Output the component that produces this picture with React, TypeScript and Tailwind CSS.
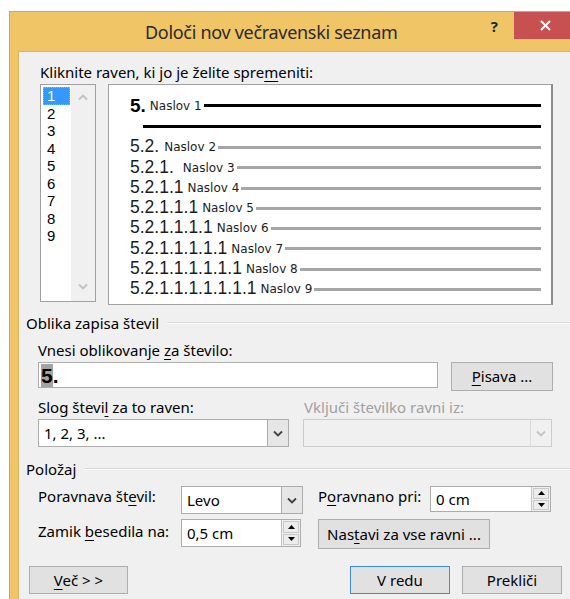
import React from "react";
import clsx from "clsx";

const UI_FONT = '"Noto Sans", "Open Sans", "DejaVu Sans", sans-serif';
const NUM_FONT = '"Liberation Sans", Arial, sans-serif';
const SMALL_FONT = '"DejaVu Sans", Verdana, sans-serif';

type Kids = { children?: React.ReactNode; className?: string };

// access-key underline
function Acc({ children }: Kids) {
  return <span className="underline decoration-1 underline-offset-[3px]">{children}</span>;
}

function Chevron({ dir = "down", color = "#3c3c3c" }: { dir?: "up" | "down"; color?: string }) {
  const d = dir === "down" ? "M1 1.5 L5 5.5 L9 1.5" : "M1 5.5 L5 1.5 L9 5.5";
  return (
    <svg width="10" height="7" viewBox="0 0 10 7" aria-hidden>
      <path d={d} fill="none" stroke={color} strokeWidth="1.8" />
    </svg>
  );
}

function Tri({ dir }: { dir: "up" | "down" }) {
  return (
    <svg width="7" height="4" viewBox="0 0 7 4" aria-hidden>
      <path d={dir === "up" ? "M0 4 L3.5 0 L7 4 Z" : "M0 0 L3.5 4 L7 0 Z"} fill="#000" />
    </svg>
  );
}

function Button({ children, className, primary }: Kids & { primary?: boolean }) {
  return (
    <div
      className={clsx(
        "flex items-center justify-center bg-[#e1e1e1] border",
        primary ? "border-[#3d8ee0]" : "border-[#adadad]",
        className
      )}
    >
      {children}
    </div>
  );
}

function Select({ value, className, disabled }: { value?: string; className?: string; disabled?: boolean }) {
  return (
    <div
      className={clsx(
        "flex border",
        disabled ? "bg-[#f0f0f0] border-[#cccccc]" : "bg-white border-[#acacac]",
        className
      )}
    >
      <div className="flex-1 flex items-center pl-[5px]">{value}</div>
      <div
        className={clsx(
          "w-[21px] flex items-center justify-center border-l",
          disabled ? "border-[#d9d9d9]" : "bg-[#e6e6e6] border-[#acacac]"
        )}
      >
        <Chevron color={disabled ? "#c4c4c4" : "#404040"} />
      </div>
    </div>
  );
}

function Spin({ value, className }: { value: string; className?: string }) {
  return (
    <div className={clsx("flex bg-white border border-[#acacac]", className)}>
      <div className="flex-1 flex items-center pl-[5px]">{value}</div>
      <div className="w-[19px] flex flex-col gap-[1px] p-[1px] border-l border-[#c4c4c4] bg-[#f0f0f0]">
        <div className="flex-1 flex items-center justify-center border border-[#c8c8c8] bg-[#ececec]">
          <Tri dir="up" />
        </div>
        <div className="flex-1 flex items-center justify-center border border-[#c8c8c8] bg-[#ececec]">
          <Tri dir="down" />
        </div>
      </div>
    </div>
  );
}

function GroupHeader({ children }: Kids) {
  return (
    <div className="flex items-center pl-[7px] h-[20px] leading-[20px]">
      <span>{children}</span>
      <div className="flex-1 ml-[8px] h-[2px] border-t border-[#dcdcdc] border-b border-b-white" />
    </div>
  );
}

const levels = ["1", "2", "3", "4", "5", "6", "7", "8", "9"];

const rows = [
  { num: "5.2.", label: "Naslov 2", gap: "ml-[5px]", h: "h-[20px]" },
  { num: "5.2.1.", label: "Naslov 3", gap: "ml-[9px]", h: "h-[21px]" },
  { num: "5.2.1.1", label: "Naslov 4", gap: "ml-[4px]", h: "h-[20px]" },
  { num: "5.2.1.1.1", label: "Naslov 5", gap: "ml-[4px]", h: "h-[20px]" },
  { num: "5.2.1.1.1.1", label: "Naslov 6", gap: "ml-[4px]", h: "h-[20px]" },
  { num: "5.2.1.1.1.1.1", label: "Naslov 7", gap: "ml-[4px]", h: "h-[21px]" },
  { num: "5.2.1.1.1.1.1.1", label: "Naslov 8", gap: "ml-[4px]", h: "h-[20px]" },
  { num: "5.2.1.1.1.1.1.1.1", label: "Naslov 9", gap: "ml-[4px]", h: "h-[20px]" },
];

function LevelList() {
  return (
    <div className="w-[56px] h-[218px] flex border border-[#a0a0a0] bg-white">
      <div className="w-[30px] pt-[2px] text-[15px]" style={{ fontFamily: NUM_FONT }}>
        {levels.map((l, i) =>
          i === 0 ? (
            <div
              key={l}
              className="ml-[2px] w-[27px] h-[17.5px] leading-[15.5px] pl-[3px] bg-[#3399ff] text-white border border-dotted border-[#f0a050]"
            >
              {l}
            </div>
          ) : (
            <div key={l} className="h-[17.5px] leading-[17.5px] pl-[6px] text-black">
              {l}
            </div>
          )
        )}
      </div>
      <div className="flex-1 flex flex-col items-center justify-between bg-[#f0f0f0] pt-[9px] pb-[11px]">
        <Chevron dir="up" color="#c2c2c2" />
        <Chevron dir="down" color="#c2c2c2" />
      </div>
    </div>
  );
}

function Preview() {
  return (
    <div
      className="w-[445px] h-[221px] bg-white border border-[#a0a0a0] border-r-2 border-r-[#8c8c8c] pt-[10px] pl-[21px] pr-[10px] text-[#1c1c1c]"
      style={{ fontFamily: NUM_FONT }}
    >
      <div className="h-[21px] flex items-center">
        <span className="text-[19px] font-bold leading-none text-black">5.</span>
        <span className="ml-[4px] text-[12px] leading-none" style={{ fontFamily: SMALL_FONT }}>
          Naslov 1
        </span>
        <div className="flex-1 ml-[2px] h-[3px] bg-black" />
      </div>
      <div className="h-[21px] flex items-center pl-[13px]">
        <div className="flex-1 h-[3px] bg-black" />
      </div>
      {rows.map((r) => (
        <div key={r.label} className={clsx("flex items-center", r.h)}>
          <span className="text-[17.5px] leading-none">{r.num}</span>
          <span className={clsx("text-[12px] leading-none", r.gap)} style={{ fontFamily: SMALL_FONT }}>
            {r.label}
          </span>
          <div className="flex-1 ml-[2px] h-[3px] bg-[#a6a6a6]" />
        </div>
      ))}
    </div>
  );
}

export default function App() {
  return (
    <div className="w-[570px] h-[599px] overflow-hidden bg-white text-[15px] text-black" style={{ fontFamily: UI_FONT }}>
      <div className="ml-[9px] mt-[11px] w-[568px] h-[620px] flex flex-col bg-[#f0c566] border-l border-t border-[#d4a84c]">
        {/* title bar */}
        <div className="h-[39px] flex items-start">
          <div className="flex-1 pl-[135px] pt-[8px] text-[18px] leading-[25px] tracking-[-0.3px] text-[#2a2a2a]">
            Določi nov večravenski seznam
          </div>
          <div className="pt-[4px] text-[15px] font-bold leading-[20px] text-[#262626]">?</div>
          <div className="ml-[16px] w-[63px] h-[27px] bg-[#c75050] flex items-center justify-center">
            <svg width="11" height="11" viewBox="0 0 11 11" aria-hidden>
              <path d="M1 1 L10 10 M10 1 L1 10" stroke="#fff" strokeWidth="2" />
            </svg>
          </div>
        </div>

        {/* client area */}
        <div className="ml-[8px] flex-1 bg-[#f0f0f0] border-l border-t border-[#dab661]">
          <div className="mt-[10px] pl-[21px] h-[20px] leading-[20px]">
            Kliknite raven, ki jo je želite spre<Acc>m</Acc>eniti:
          </div>
          <div className="mt-[2px] pl-[21px] flex items-start gap-[12px]">
            <LevelList />
            <Preview />
          </div>

          <div className="mt-[8px]">
            <GroupHeader>Oblika zapisa števil</GroupHeader>
          </div>
          <div className="mt-[7px] pl-[19px] h-[20px] leading-[20px]">
            Vnesi oblikovanje <Acc>z</Acc>a število:
          </div>
          <div className="mt-[2px] pl-[19px] flex items-start gap-[13px]">
            <div className="w-[400px] h-[26px] bg-white border border-[#acacac] flex items-end pl-[2px]">
              <span
                className="text-[21px] font-bold leading-[22px] text-black"
                style={{ fontFamily: NUM_FONT }}
              >
                <span className="bg-[#a3a3a3]">5</span>.
              </span>
            </div>
            <Button className="w-[102px] h-[29px]">
              <span>
                <Acc>P</Acc>isava ...
              </span>
            </Button>
          </div>

          <div className="mt-[6px] pl-[19px] flex gap-[14px]">
            <div className="w-[251px] flex flex-col">
              <div className="h-[20px] leading-[20px]">
                Slog števi<Acc>l</Acc> za to raven:
              </div>
              <Select className="mt-[2px] h-[28px]" value="1, 2, 3, ..." />
            </div>
            <div className="w-[249px] flex flex-col">
              <div className="h-[20px] leading-[20px] pl-[1px] text-[#a0a0a0]">Vključi številko ravni iz:</div>
              <Select className="mt-[2px] h-[28px]" disabled />
            </div>
          </div>

          <div className="mt-[12px]">
            <GroupHeader>Položaj</GroupHeader>
          </div>
          <div className="mt-[7px] pl-[19px] flex items-start">
            <div className="w-[143px] leading-[20px]">
              Poravnava št<Acc>e</Acc>vil:
            </div>
            <Select className="w-[122px] h-[28px]" value="Levo" />
            <div className="ml-[15px] w-[112px] leading-[20px]">
              P<Acc>o</Acc>ravnano pri:
            </div>
            <Spin className="w-[121px] h-[26px]" value="0 cm" />
          </div>
          <div className="mt-[5px] pl-[19px] flex items-start">
            <div className="w-[143px] mt-[2px] leading-[20px]">
              Zamik <Acc>b</Acc>esedila na:
            </div>
            <Spin className="w-[120px] h-[28px]" value="0,5 cm" />
            <Button className="ml-[17px] w-[172px] h-[30px]">
              <span>
                Nas<Acc>t</Acc>avi za vse ravni ...
              </span>
            </Button>
          </div>

          <div className="mt-[17px] pl-[10px] flex items-start">
            <Button className="w-[99px] h-[28px]">
              <span>
                <Acc>V</Acc>eč &gt; &gt;
              </span>
            </Button>
            <Button primary className="ml-[222px] w-[100px] h-[28px]">
              V redu
            </Button>
            <Button className="ml-[12px] w-[100px] h-[28px]">Prekliči</Button>
          </div>
        </div>
      </div>
    </div>
  );
}
